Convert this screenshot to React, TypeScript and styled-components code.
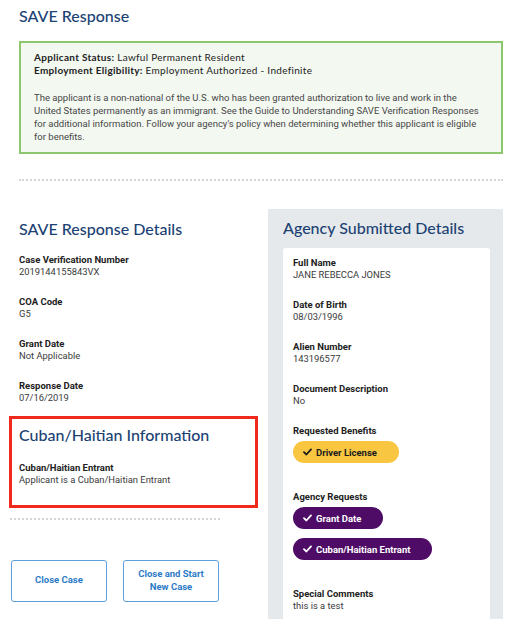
import React from "react";
import styled, { createGlobalStyle } from "styled-components";

const GlobalStyle = createGlobalStyle`
  html, body {
    margin: 0;
    padding: 0;
    background: #ffffff;
  }
  body {
    font-family: Roboto, "Liberation Sans", sans-serif;
    color: #2b2b2b;
  }
`;

// ─── Styled components ───────────────────────────────────────────────────────

const Page = styled.div`
  padding: 6px 7px 0 9px;
  width: 494px;
`;

const Top = styled.section`
  padding-left: 10px;
`;

const Heading = styled.h2`
  font-family: Lato, "Noto Sans", sans-serif;
  font-size: 16px;
  font-weight: 500;
  line-height: 20px;
  color: #1c4273;
  margin: 0;
`;

const StatusBox = styled.div`
  margin-top: 15px;
  background: #f3f8f1;
  border: 2px solid #8cc66d;
  padding: 8px 13px 9px;
`;

const StatusLine = styled.div`
  font-family: Lato, "Noto Sans", sans-serif;
  font-size: 10px;
  letter-spacing: 0.3px;
  line-height: 13px;
  color: #222;

  b {
    font-weight: 700;
  }
`;

const StatusText = styled.p`
  margin: 14px 0 0;
  font-size: 9.5px;
  line-height: 13px;
  color: #474747;
  white-space: nowrap;
`;

const Divider = styled.hr<{ $width?: string }>`
  border: none;
  border-top: 2px dotted #d3d6d9;
  margin: 0;
  width: ${(p) => p.$width ?? "100%"};
`;

const TopDivider = styled(Divider)`
  margin-top: 25px;
`;

const Columns = styled.div`
  display: grid;
  grid-template-columns: 249px 235px;
  column-gap: 10px;
  margin-top: 28px;
  align-items: start;
`;

const LeftCol = styled.div`
  padding-top: 10px;
`;

const LeftInner = styled.div`
  padding-left: 10px;
`;

const FieldList = styled.div<{ $gap: number; $top?: number }>`
  display: flex;
  flex-direction: column;
  gap: ${(p) => p.$gap}px;
  margin-top: ${(p) => p.$top ?? 15}px;
`;

const Field = styled.div``;

const Label = styled.div`
  font-size: 9.5px;
  font-weight: 700;
  line-height: 12px;
  color: #222;
`;

const Value = styled.div`
  font-size: 9.4px;
  line-height: 12px;
  color: #3a3a3a;
`;

const Highlight = styled.section`
  margin-top: 12px;
  border: 3px solid #f0291d;
  padding: 6px 7px 19px 7px;
`;

const HighlightFields = styled.div`
  margin-top: 17px;
`;

const LeftDivider = styled(Divider)`
  margin: 10px 0 0 1px;
`;

const Actions = styled.div`
  display: flex;
  gap: 16px;
  margin: 40px 0 0 2px;
`;

const ActionButton = styled.button`
  width: 96px;
  height: 42px;
  background: #fff;
  border: 1.5px solid #5c9fdc;
  border-radius: 3px;
  color: #2b7bc6;
  font-family: Roboto, "Liberation Sans", sans-serif;
  font-size: 9.5px;
  font-weight: 700;
  line-height: 13px;
  padding: 0 10px 3px;
`;

const Panel = styled.aside`
  background: #e6e9ec;
  padding: 9px 13px 20px 15px;
  min-height: 420px;
`;

const Card = styled.div`
  margin-top: 10px;
  background: #fff;
  border-radius: 3px;
  padding: 9px 10px 30px;
`;

const PillGroup = styled.div`
  display: flex;
  flex-direction: column;
  align-items: flex-start;
  gap: 9px;
  margin-top: 4px;
`;

const Pill = styled.span<{ $tone: "gold" | "purple" }>`
  display: inline-flex;
  align-items: center;
  gap: 4px;
  height: 22px;
  padding: 0 22px 0 10px;
  border-radius: 11px;
  font-size: 9.5px;
  font-weight: 700;
  background: ${(p) => (p.$tone === "gold" ? "#f9c642" : "#4e0c66")};
  color: ${(p) => (p.$tone === "gold" ? "#1b1b1b" : "#ffffff")};
`;

const CardGroup = styled.div`
  margin-top: 28px;
`;

// ─── Component ───────────────────────────────────────────────────────────────

const Check = () => (
  <svg width="9" height="8" viewBox="0 0 9 8" aria-hidden="true">
    <path d="M1 4.2 L3.4 6.5 L8 1.4" fill="none" stroke="currentColor" strokeWidth="1.8" strokeLinecap="round" strokeLinejoin="round" />
  </svg>
);

const responseDetails = [
  ["Case Verification Number", "2019144155843VX"],
  ["COA Code", "G5"],
  ["Grant Date", "Not Applicable"],
  ["Response Date", "07/16/2019"],
];

const agencyDetails = [
  ["Full Name", "JANE REBECCA JONES"],
  ["Date of Birth", "08/03/1996"],
  ["Alien Number", "143196577"],
  ["Document Description", "No"],
];

export default function App() {
  return (
    <>
      <GlobalStyle />
      <Page>
        <Top>
          <Heading>SAVE Response</Heading>
          <StatusBox>
            <StatusLine>
              <b>Applicant Status:</b> Lawful Permanent Resident
            </StatusLine>
            <StatusLine>
              <b>Employment Eligibility:</b> Employment Authorized - Indefinite
            </StatusLine>
            <StatusText>
              The applicant is a non-national of the U.S. who has been granted authorization to live and work in the
              <br />
              United States permanently as an immigrant. See the Guide to Understanding SAVE Verification Responses
              <br />
              for additional information. Follow your agency's policy when determining whether this applicant is eligible
              <br />
              for benefits.
            </StatusText>
          </StatusBox>
          <TopDivider />
        </Top>

        <Columns>
          <LeftCol>
            <LeftInner>
              <Heading>SAVE Response Details</Heading>
              <FieldList $gap={18}>
                {responseDetails.map(([label, value]) => (
                  <Field key={label}>
                    <Label>{label}</Label>
                    <Value>{value}</Value>
                  </Field>
                ))}
              </FieldList>
            </LeftInner>

            <Highlight>
              <Heading>Cuban/Haitian Information</Heading>
              <HighlightFields>
                <Label>Cuban/Haitian Entrant</Label>
                <Value>Applicant is a Cuban/Haitian Entrant</Value>
              </HighlightFields>
            </Highlight>
            <LeftDivider $width="210px" />

            <Actions>
              <ActionButton>Close Case</ActionButton>
              <ActionButton>Close and Start New Case</ActionButton>
            </Actions>
          </LeftCol>

          <Panel>
            <Heading>Agency Submitted Details</Heading>
            <Card>
              <FieldList $gap={18} $top={0}>
                {agencyDetails.map(([label, value]) => (
                  <Field key={label}>
                    <Label>{label}</Label>
                    <Value>{value}</Value>
                  </Field>
                ))}
                <Field>
                  <Label>Requested Benefits</Label>
                  <PillGroup>
                    <Pill $tone="gold">
                      <Check />
                      Driver License
                    </Pill>
                  </PillGroup>
                </Field>
              </FieldList>

              <CardGroup>
                <Label>Agency Requests</Label>
                <PillGroup>
                  <Pill $tone="purple">
                    <Check />
                    Grant Date
                  </Pill>
                  <Pill $tone="purple">
                    <Check />
                    Cuban/Haitian Entrant
                  </Pill>
                </PillGroup>
              </CardGroup>

              <CardGroup>
                <Label>Special Comments</Label>
                <Value>this is a test</Value>
              </CardGroup>
            </Card>
          </Panel>
        </Columns>
      </Page>
    </>
  );
}
